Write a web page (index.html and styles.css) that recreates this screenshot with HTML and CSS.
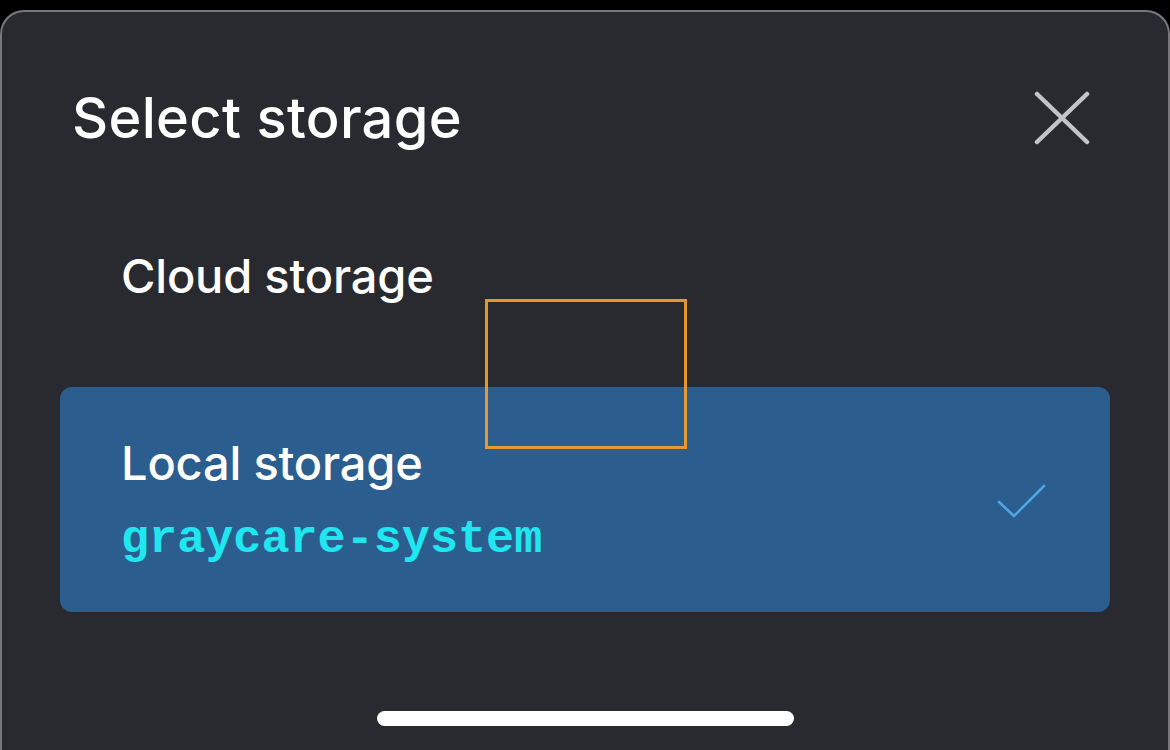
FILE: index.html
```html
<!DOCTYPE html>
<html lang="en">
<head>
<meta charset="utf-8">
<title>Select storage</title>
<link rel="stylesheet" href="styles.css">
</head>
<body>
<div class="sheet">
  <div class="sheet-header">
    <h1 class="sheet-title">Select storage</h1>
    <button class="close-btn" aria-label="Close">
      <svg width="56" height="54" viewBox="0 0 56 54"><path d="M3 3 L53 51 M53 3 L3 51" stroke="#c4c4c8" stroke-width="4.5" stroke-linecap="round" fill="none"/></svg>
    </button>
  </div>
  <ul class="options">
    <li class="option">
      <div class="option-text">
        <div class="option-label">Cloud storage</div>
      </div>
    </li>
    <li class="option option-selected">
      <div class="option-text">
        <div class="option-label">Local storage</div>
        <div class="option-sub">graycare-system</div>
      </div>
      <svg class="check" width="50" height="35" viewBox="0 0 50 35"><path d="M2 18 L17 32 L47 2" stroke="#4ea5e2" stroke-width="2.6" stroke-linecap="round" stroke-linejoin="round" fill="none"/></svg>
    </li>
  </ul>
  <div class="home-indicator"></div>
  <div class="focus-box"></div>
</div>
</body>
</html>
```

FILE: styles.css
```css
html, body {
  margin: 0;
  padding: 0;
  background: #000;
}
body {
  width: 1170px;
  height: 750px;
  overflow: hidden;
  font-family: Inter, "Liberation Sans", Arial, sans-serif;
  color: #fff;
}
.sheet {
  position: relative;
  box-sizing: border-box;
  margin-top: 10px;
  height: 740px;
  background: #282a2f;
  border: 2px solid #78787c;
  border-bottom: none;
  border-radius: 24px 24px 0 0;
  display: flex;
  flex-direction: column;
}
.sheet-header {
  display: flex;
  align-items: center;
  justify-content: space-between;
  padding: 73px 78px 0 70px;
  height: 66px;
}
.sheet-title {
  margin: 0;
  font-size: 56px;
  font-weight: 500;
  line-height: 66px;
  letter-spacing: 0.3px;
}
.close-btn {
  background: none;
  border: none;
  padding: 0;
  display: flex;
  cursor: pointer;
}
.options {
  list-style: none;
  margin: 0 58px;
  padding: 0;
  display: flex;
  flex-direction: column;
}
.option {
  display: flex;
  align-items: center;
  justify-content: space-between;
  padding: 97px 63px 83px 61px;
  border-radius: 12px;
}
.option-selected {
  background: #2b5d8e;
  padding-top: 48px;
  padding-bottom: 44px;
}
.option-label {
  font-size: 47px;
  font-weight: 500;
  line-height: 56px;
  letter-spacing: -0.2px;
}
.option-sub {
  margin-top: 21px;
  font-family: "Liberation Mono", "Courier New", monospace;
  font-weight: 700;
  font-size: 46.8px;
  line-height: 56px;
  color: #1fe6ef;
}
.check {
  display: block;
  margin-top: 0;
}
.home-indicator {
  margin: auto auto 24px;
  width: 417px;
  height: 15px;
  border-radius: 8px;
  background: #fff;
}
.focus-box {
  position: absolute;
  left: 483px;
  top: 287px;
  width: 196px;
  height: 144px;
  border: 3px solid rgba(244, 160, 40, 0.92);
}
```
